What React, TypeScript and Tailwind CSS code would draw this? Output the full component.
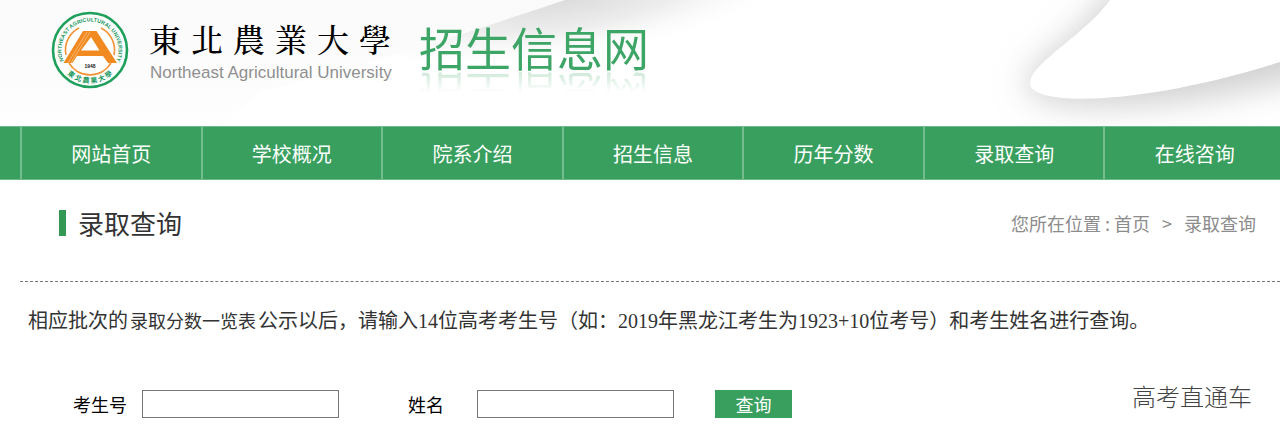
import { useId } from "react";

const navItems = ["网站首页", "学校概况", "院系介绍", "招生信息", "历年分数", "录取查询", "在线咨询"];

/** Pale folded-paper backdrop behind the logo row. */
function Swoosh() {
  return (
    <svg
      className="absolute inset-0 size-full"
      viewBox="0 0 1280 126"
      preserveAspectRatio="none"
      aria-hidden="true"
    >
      <defs>
        <linearGradient id="base" x1="0" y1="0" x2="0" y2="1">
          <stop offset="0" stopColor="#fafafb" />
          <stop offset="1" stopColor="#fefefe" />
        </linearGradient>
        <radialGradient
          id="band"
          gradientUnits="userSpaceOnUse"
          cx="0"
          cy="0"
          r="1"
          gradientTransform="translate(565 -4) rotate(-8) scale(250 66)"
        >
          <stop offset="0" stopColor="#dadada" />
          <stop offset="0.5" stopColor="#ededed" />
          <stop offset="1" stopColor="#fff" stopOpacity="0" />
        </radialGradient>
        <filter id="soft" x="-30%" y="-60%" width="160%" height="220%">
          <feGaussianBlur stdDeviation="16" />
        </filter>
      </defs>
      <rect width="1280" height="126" fill="url(#base)" />
      <path d="M260 92 C400 56 480 28 565 0 H1280 V126 H220Z" fill="#fff" />
      <path d="M260 92 C400 56 480 28 565 0 H1280 V126 H220Z" fill="url(#band)" />
      <path
        d="M1110 -10 C1085 38 1026 62 1026 84 C1030 118 1180 112 1310 76 V-10Z"
        fill="#b8b8b8"
        fillOpacity="0.65"
        filter="url(#soft)"
      />
      <path d="M1110 0 C1086 34 1029 64 1030 84 C1033 108 1150 104 1280 62 V0Z" fill="#fff" />
    </svg>
  );
}

function Emblem() {
  const id = useId();
  return (
    <svg viewBox="0 0 78 78" className="size-[78px] shrink-0" role="img" aria-label="东北农业大学">
      <defs>
        <path id={`${id}t`} d="M15.200 54.600 A28.500 28.500 0 1 1 62.800 54.600" />
        <path id={`${id}b`} d="M6.500 46 A33.300 33.300 0 0 0 71.500 46" />
      </defs>
      <circle cx="39" cy="39" r="37" fill="#fff" stroke="#1f9f5c" strokeWidth="2.6" />
      <text
        fill="#16965a"
        fontFamily="Liberation Sans Narrow, Liberation Sans, sans-serif"
        fontWeight="700"
        fontSize="5.4"
      >
        <textPath href={`#${id}t`} startOffset="50%" textAnchor="middle">
          NORTHEAST AGRICULTURAL UNIVERSITY
        </textPath>
      </text>
      <g fill="none" stroke="#f39334" strokeWidth="1.6">
        <path d="M15 44 A24.500 24.500 0 0 1 28 17" />
        <path d="M50 17 A24.500 24.500 0 0 1 63 44" />
        <path d="M18 52 A24.500 24.500 0 0 0 60 52" />
      </g>
      <path
        d="M12.500 52 32 20 H45.500 L66 52 H57 L52 45 H26 L21.500 52Z M30 39.500 H48.500 L40 26Z"
        fill="#f18a20"
        fillRule="evenodd"
      />
      <path d="M17 52 36 21 M20 52 39 21" stroke="#fbc88f" strokeWidth="0.7" />
      <text
        x="39"
        y="57"
        textAnchor="middle"
        fill="#222"
        fontFamily="Liberation Sans, sans-serif"
        fontWeight="700"
        fontSize="5"
      >
        1948
      </text>
      <text fill="#16965a" fontFamily="Noto Sans CJK TC, sans-serif" fontWeight="700" fontSize="7">
        <textPath href={`#${id}b`} startOffset="50%" textAnchor="middle">
          東 北 農 業 大 學
        </textPath>
      </text>
    </svg>
  );
}

function Header() {
  return (
    <header className="relative h-[126px] overflow-hidden">
      <Swoosh />
      <div className="relative flex items-start pt-[11px] pl-[51px]">
        <Emblem />
        <div className="ml-5 w-[242px]">
          <div
            lang="zh-Hant"
            className="flex justify-between font-['Noto_Serif_CJK_TC','Noto_Sans_CJK_TC',serif] text-[32px] leading-[54px] font-medium text-black"
          >
            {["東", "北", "農", "業", "大", "學"].map((char) => (
              <span key={char}>{char}</span>
            ))}
          </div>
          <p className="pl-px font-['Liberation_Sans',sans-serif] text-[17px] leading-4 whitespace-nowrap text-[#8f8f8f]">
            Northeast Agricultural University
          </p>
        </div>
        <p className="mt-[10px] ml-7 font-['Noto_Sans_CJK_SC',sans-serif] text-[46px] leading-[50px] text-[#3da565] [-webkit-box-reflect:below_1px_linear-gradient(transparent_60%,rgba(0,0,0,0.25))]">
          招生信息网
        </p>
      </div>
    </header>
  );
}

function Nav() {
  return (
    <nav className="overflow-hidden border-y border-[#6fba8a] bg-[#399f5e] pl-5">
      <div className="-mr-1 flex h-[52px]">
        {navItems.map((item) => (
          <a
            key={item}
            href="#"
            className="flex flex-1 items-center justify-center border-l-2 border-[#75bd8f] pt-px text-xl whitespace-nowrap text-white"
          >
            {item}
          </a>
        ))}
      </div>
    </nav>
  );
}

export default function App() {
  return (
    <div className="min-h-screen overflow-hidden bg-white font-['Noto_Sans_CJK_SC',sans-serif] text-[#333]">
      <Header />
      <Nav />
      <main className="relative pl-5">
        <div className="flex h-[102px] items-start justify-between border-b border-dashed border-[#777] pt-[23px] pr-6 pl-[39px]">
          <h1 className="flex items-center gap-3 text-[26px] leading-10">
            <span className="h-[26px] w-[7px] bg-[#329854]" />
            录取查询
          </h1>
          <div className="flex gap-3 text-lg leading-10 text-[#8c8c8c]">
            <span>
              您所在位置 : <a href="#">首页</a>
            </span>
            <span>&gt;</span>
            <span>录取查询</span>
          </div>
        </div>
        <p className="pt-[19px] pl-2 font-['Liberation_Serif','Noto_Sans_CJK_SC',serif] text-xl leading-10 whitespace-nowrap">
          相应批次的
          <a href="#" className="mx-0.5 text-lg">
            录取分数一览表
          </a>
          公示以后，请输入14位高考考生号（如：2019年黑龙江考生为1923+10位考号）和考生姓名进行查询。
        </p>
        <form
          className="flex items-center pt-[49px] pl-[53px] text-lg leading-7 text-black"
          onSubmit={(e) => e.preventDefault()}
        >
          <label htmlFor="examNo">考生号</label>
          <input id="examNo" type="text" className="ml-[15px] h-7 w-[197px] border border-[#777] px-1" />
          <label htmlFor="name" className="ml-[69px]">
            姓名
          </label>
          <input id="name" type="text" className="ml-[33px] h-7 w-[197px] border border-[#777] px-1" />
          <button type="submit" className="ml-[41px] h-7 w-[77px] bg-[#399f5e] text-white">
            查询
          </button>
        </form>
        <span className="absolute right-7 bottom-1.5 text-2xl font-light text-[#444]">高考直通车</span>
      </main>
    </div>
  );
}
